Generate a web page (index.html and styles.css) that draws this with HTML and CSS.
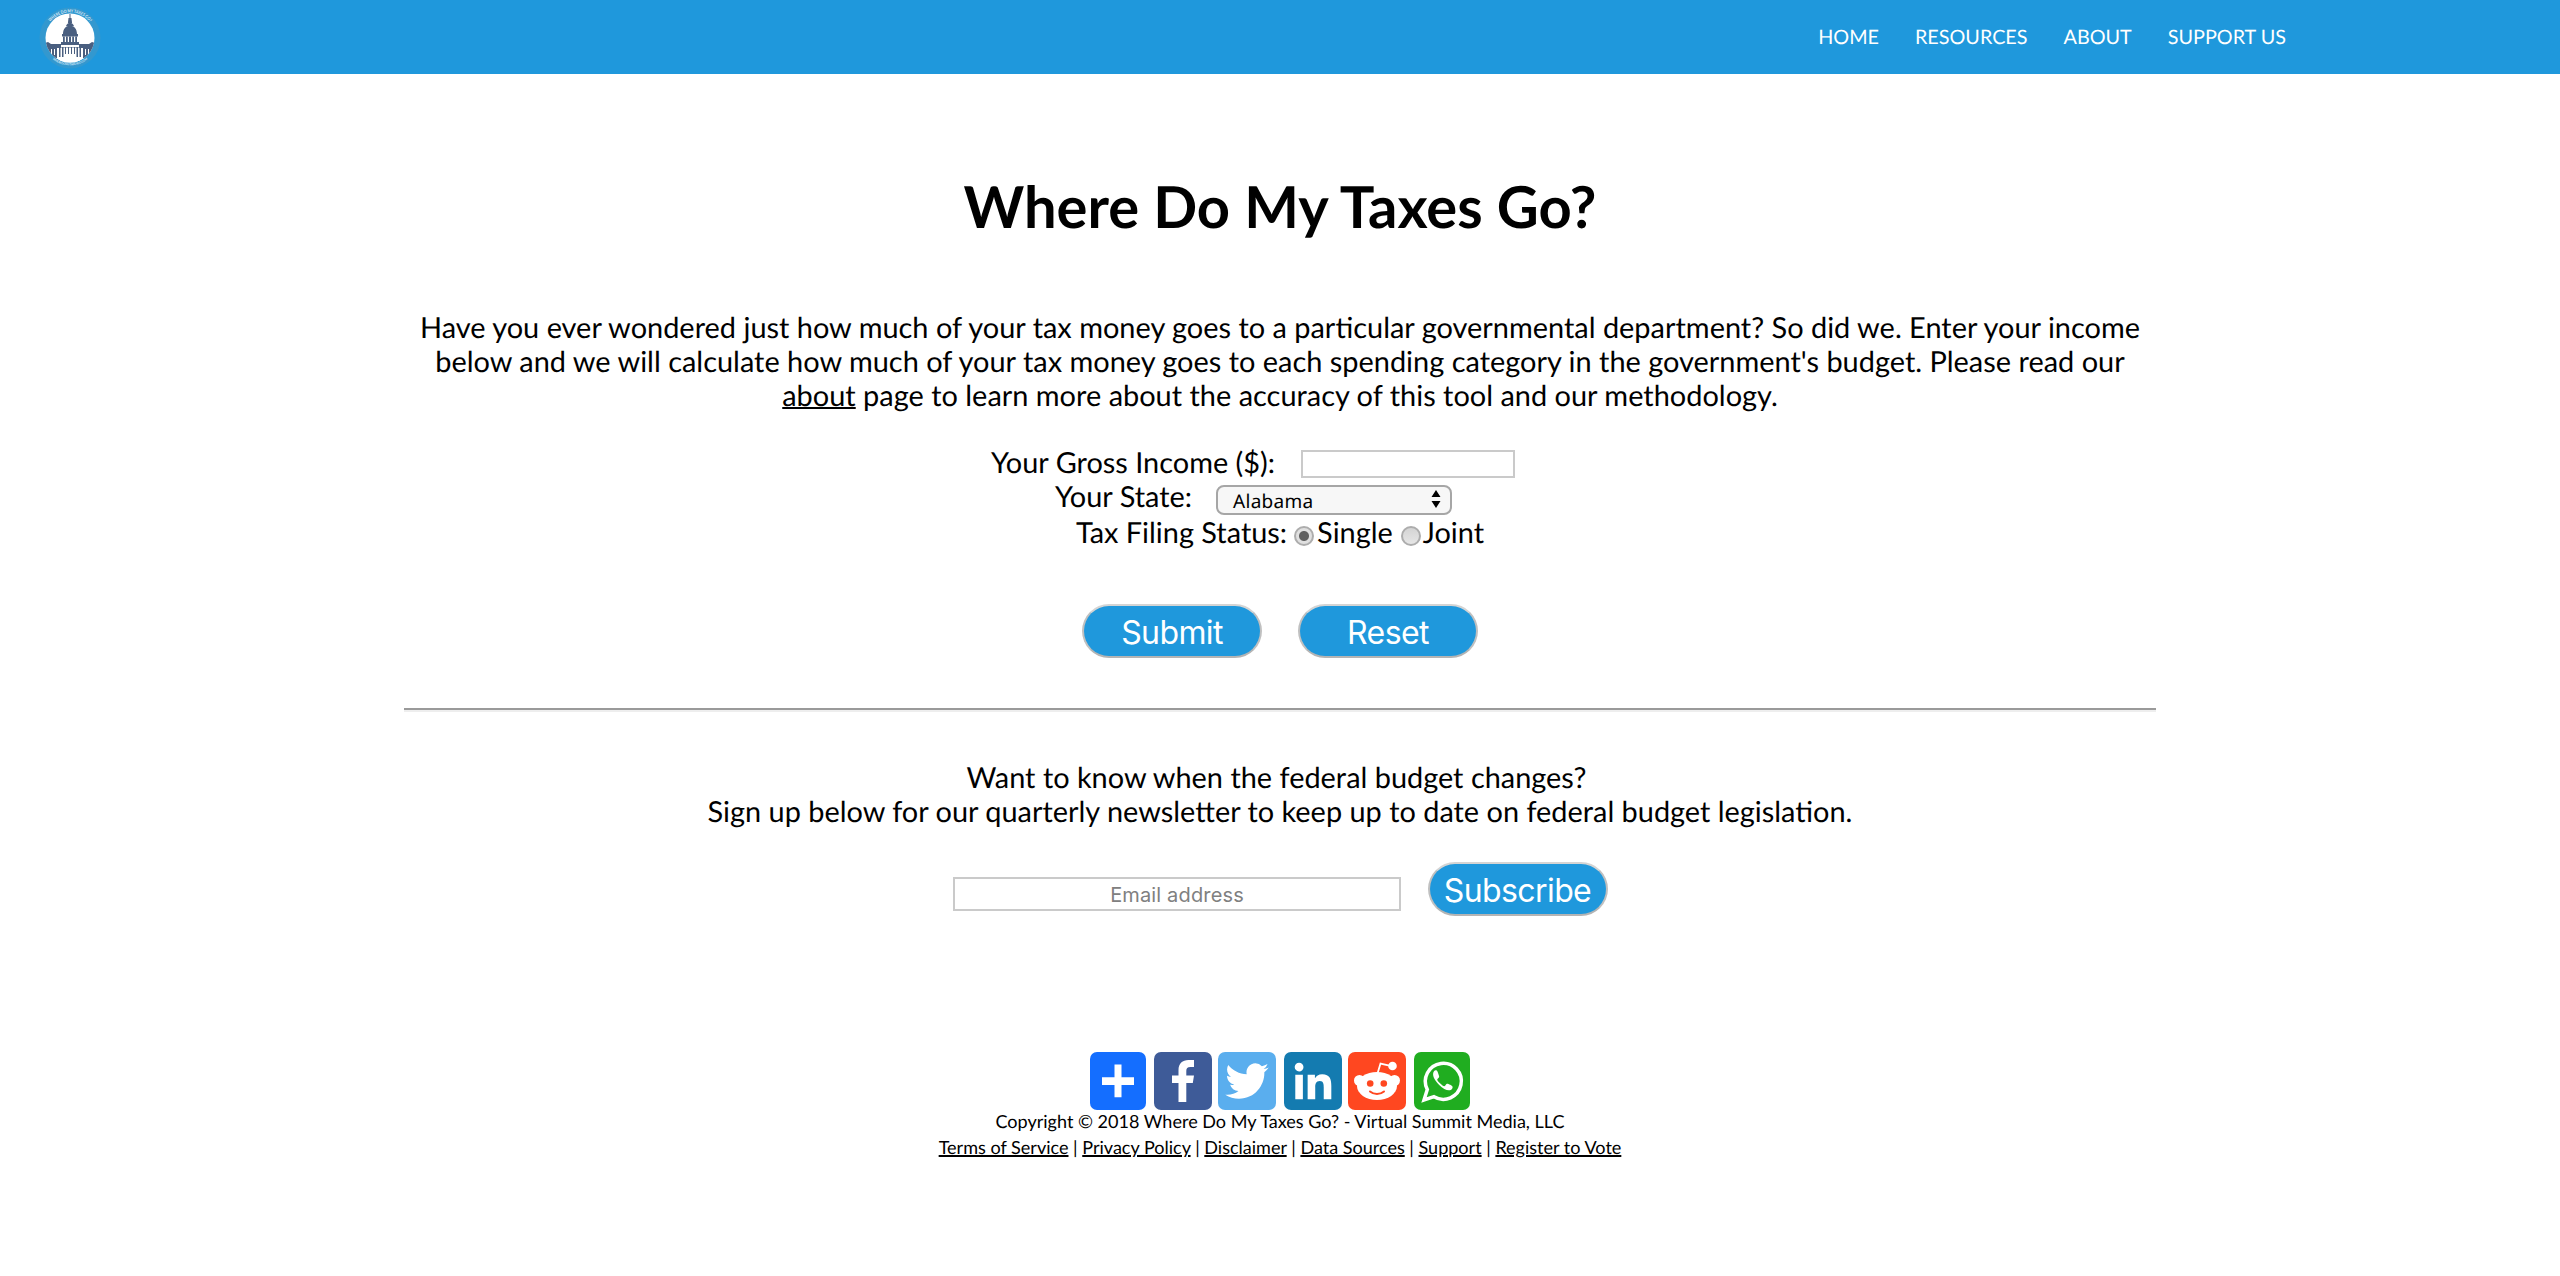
FILE: index.html
```html
<!DOCTYPE html>
<html lang="en">
<head>
<meta charset="utf-8">
<title>Where Do My Taxes Go?</title>
<link rel="stylesheet" href="styles.css">
</head>
<body>
<header class="topbar">
  <a class="logo" href="#">
    <svg width="62" height="62" viewBox="0 0 62 62">
      <defs>
        <path id="arcTop" d="M5.500 31a25.500 25.500 0 0 1 51 0"/>
        <path id="arcBottom" d="M3.500 31a27.500 27.500 0 0 0 55 0"/>
        <clipPath id="disc"><circle cx="31" cy="31" r="24.500"/></clipPath>
      </defs>
      <circle cx="31" cy="31" r="30.500" fill="#3398cf"/>
      <circle cx="31" cy="31" r="24.500" fill="#fff"/>
      <g clip-path="url(#disc)" fill="#4a5f80">
        <path d="M30.500 7h1v4h-1zM29.500 11h3l.6 5h-4.200zM27 19c1-2.500 2.500-3 4-3s3 .5 4 3zM24 27c0-5 3-8.500 7-8.500s7 3.500 7 8.500zM23 27h16v2.500H23zM22 35h18v3H22z"/>
        <path d="M24 29.500h1.800V35H24zM27 29.500h1.800V35H27zM30 29.500h2V35h-2zM33.200 29.500H35V35h-1.800zM36.200 29.500H38V35h-1.800z"/>
        <path d="M6 36l3-1 3 2h10v3.500h18V37h10l3-2 3 1v5H6zM6 40h12v11H6zM44 40h12v11H44zM20 40h1.500v10H20zM23 40h1.500v10H23zM26 40h1v7h-1zM29 40h1v7h-1zM32 40h1v7h-1zM35 40h1v7h-1zM37.500 40H39v10h-1.500zM40.500 40H42v10h-1.500z"/>
        <path d="M12 42h1v6h-1zM15 42h1v6h-1zM46 42h1v6h-1zM49 42h1v6h-1z" fill="#fff"/>
        <path d="M13 51h36L31 58z" fill="#fff"/>
      </g>
      <text class="ring ring-top"><textPath href="#arcTop" startOffset="50%" text-anchor="middle" textLength="45" lengthAdjust="spacingAndGlyphs">WHERE DO MY TAXES GO?</textPath></text>
      <text class="ring ring-bottom"><textPath href="#arcBottom" startOffset="50%" text-anchor="middle" textLength="38" lengthAdjust="spacingAndGlyphs">WHEREDOMYTAXESGO.COM</textPath></text>
    </svg>
  </a>
  <nav class="menu">
    <a href="#">HOME</a><a href="#">RESOURCES</a><a href="#">ABOUT</a><a href="#">SUPPORT US</a>
  </nav>
</header>
<main class="content">
  <h1>Where Do My Taxes Go?</h1>
  <p class="intro">Have you ever wondered just how much of your tax money goes to a particular governmental department? So did we. Enter your income<br>below and we will calculate how much of your tax money goes to each spending category in the government's budget. Please read our<br><a href="#">about</a> page to learn more about the accuracy of this tool and our methodology.</p>
  <form class="tax-form">
    <div class="row row-income"><label for="income">Your Gross Income ($):</label><input id="income" class="field income" type="text"></div>
    <div class="row row-state"><span>Your State:</span>
      <div class="select"><span>Alabama</span>
        <svg width="10" height="18" viewBox="0 0 10 18"><path d="M5 0l4.500 7h-9zM5 18l4.500-7h-9z"/></svg>
      </div>
    </div>
    <div class="row row-status"><span>Tax Filing Status:</span><i class="radio checked"></i><span>Single</span><i class="radio second"></i><span>Joint</span></div>
    <div class="actions"><button class="pill" type="button">Submit</button><button class="pill" type="button">Reset</button></div>
  </form>
  <hr>
  <p class="newsletter"><span class="question">Want to know when the federal budget changes?</span><br>Sign up below for our quarterly newsletter to keep up to date on federal budget legislation.</p>
  <form class="signup"><input class="field email" type="text" placeholder="Email address"><button class="pill" type="button">Subscribe</button></form>
</main>
<footer class="footer">
  <div class="share">
    <svg class="plus" width="56" height="58" viewBox="0 0 56 58"><rect width="56" height="58" rx="7" fill="#146eff"/><path d="M24.500 12.500h7v12.700H44V33H31.500v12.300h-7V33H12v-7.800h12.500z" fill="#fff"/></svg>
    <svg class="facebook" width="58" height="58" viewBox="0 0 58 58"><rect width="58" height="58" rx="7" fill="#3e5b98"/><path d="M24.500 50V31H18v-7.500h6.500V18c0-6.500 4-10 10-10H40v7h-3.600c-3 0-4.100 1.300-4.100 4v4.500H40L38.800 31h-6.500v19z" fill="#fff"/></svg>
    <svg class="twitter" width="58" height="58" viewBox="0 0 32 32"><rect width="32" height="32" rx="3.900" fill="#5aaeee"/><path fill="#fff" d="M28 8.557a9.913 9.913 0 0 1-2.828.775 4.930 4.930 0 0 0 2.166-2.725 9.738 9.738 0 0 1-3.130 1.194 4.920 4.920 0 0 0-3.593-1.550 4.924 4.924 0 0 0-4.794 6.049c-4.090-.21-7.720-2.170-10.150-5.150a4.942 4.942 0 0 0-.665 2.477c0 1.710.870 3.214 2.190 4.100a4.968 4.968 0 0 1-2.230-.616v.060c0 2.390 1.700 4.380 3.952 4.830-.414.115-.850.174-1.297.174-.318 0-.626-.030-.928-.086a4.935 4.935 0 0 0 4.600 3.420 9.893 9.893 0 0 1-6.114 2.107c-.398 0-.790-.023-1.175-.068a13.953 13.953 0 0 0 7.550 2.213c9.056 0 14.010-7.507 14.010-14.013 0-.213-.005-.426-.015-.637.960-.695 1.795-1.560 2.455-2.550z"/></svg>
    <svg class="linkedin" width="58" height="58" viewBox="0 0 32 32"><rect width="32" height="32" rx="3.900" fill="#147bb0"/><path fill="#fff" d="M6.227 12.610h4.190v13.480h-4.190V12.610zm2.095-6.700a2.430 2.430 0 0 1 0 4.860c-1.344 0-2.428-1.090-2.428-2.430s1.084-2.430 2.428-2.430m4.720 6.700h4.020v1.840h.058c.560-1.058 1.927-2.176 3.965-2.176 4.238 0 5.020 2.792 5.020 6.420v7.395h-4.183v-6.560c0-1.564-.030-3.574-2.178-3.574-2.180 0-2.514 1.700-2.514 3.460v6.668h-4.187V12.610z"/></svg>
    <svg class="reddit" width="58" height="58" viewBox="0 0 58 58"><rect width="58" height="58" rx="7" fill="#ff4720"/><g fill="#fff"><circle cx="11.500" cy="28.500" r="5.500"/><circle cx="46.500" cy="28.500" r="5.500"/><ellipse cx="29" cy="34" rx="20" ry="14"/><circle cx="44.500" cy="14" r="4.300"/></g><path d="M29.500 21.500l3-10 10 2.300" fill="none" stroke="#fff" stroke-width="1.800"/><circle cx="22.200" cy="31.500" r="3.300" fill="#ff4720"/><circle cx="35.800" cy="31.500" r="3.300" fill="#ff4720"/><path d="M22 39.500c4 3.300 10 3.300 14 0" fill="none" stroke="#ff4720" stroke-width="2" stroke-linecap="round"/></svg>
    <svg class="whatsapp" width="56" height="58" viewBox="0 0 56 58"><rect width="56" height="58" rx="7" fill="#20ad20"/><path d="M10 48l3.300-10.500a18 18 0 1 1 6.700 7.200z" fill="none" stroke="#fff" stroke-width="3.500"/><path fill="#fff" d="M21.500 18.300c-.8 0-2 1.200-2.300 2.700-.7 3.700 2.300 8.300 6 12 3.900 3.800 8.200 6 10.800 5.200 1.900-.6 3-2 2.500-3.800-.2-.8-4.600-3-5.600-2.700-1 .3-1.800 2.700-2.800 2.600-1.200-.1-6.600-4.800-6.900-6.500-.1-1 2-2 2-3 0-.9-1.500-5.400-2.200-6.100-.3-.4-.9-.4-1.500-.4z"/></svg>
  </div>
  <p class="copyright">Copyright © 2018 Where Do My Taxes Go? - Virtual Summit Media, LLC</p>
  <p class="links"><a href="#">Terms of Service</a> | <a href="#">Privacy Policy</a> | <a href="#">Disclaimer</a> | <a href="#">Data Sources</a> | <a href="#">Support</a> | <a href="#">Register to Vote</a></p>
</footer>
</body>
</html>
```
FILE: styles.css
```css
* { box-sizing: border-box; }
body { margin: 0; background: #fff; color: #000; font-family: Lato, sans-serif; text-rendering: geometricPrecision; }
a { color: inherit; }
p { margin: 0; }

.topbar { display: flex; justify-content: space-between; height: 74px; padding: 7px 274px 0 39px; background: #1f98dc; color: #fff; }
.logo { display: block; height: 62px; }
.logo svg { display: block; }
.ring { fill: #fff; fill-opacity: .8; font-family: Lato, sans-serif; font-weight: 700; }
.ring-top { font-size: 4.500px; }
.ring-bottom { font-size: 3px; }
.menu { display: flex; gap: 36px; padding-top: 18px; font-size: 19.800px; line-height: 24px; }
.menu a { text-decoration: none; }

.content { width: 1752px; margin: 0 auto; text-align: center; }
h1 { margin: 0; padding-top: 97px; font-size: 57.900px; line-height: 72px; font-weight: 700; }
.intro { padding-top: 68px; font-size: 28.930px; line-height: 34px; white-space: nowrap; }
.intro a, .links a { text-decoration-thickness: 2px; }

.tax-form { padding-top: 33px; font-size: 28.900px; line-height: 34px; }
.row { display: flex; justify-content: center; align-items: flex-start; height: 35px; }
.row-income { height: 34px; padding-right: 54px; }
.row-state { height: 36px; padding-right: 53px; }
.field { display: block; padding: 0; border: 2px solid #cacaca; background: #fff; font-family: Inter, sans-serif; }
.income { width: 214px; height: 28px; margin: 4px 0 0 26px; }
.select { display: flex; justify-content: space-between; align-items: center; width: 236px; height: 30px; margin: 5px 0 0 24px; padding: 0 9px 0 15px; border: 2px solid #a6a6a6; border-radius: 8px; background: #f7f7f7; font: 19px/24px "Noto Sans", sans-serif; letter-spacing: .3px; }
.select span { padding-top: 1px; }
.select svg { margin-top: -2px; }
.radio { width: 20px; height: 20px; margin: 10px 3px 0 7px; border: 2px solid #adadad; border-radius: 50%; background: linear-gradient(#d4d4d4, #e6e6e6); }
.radio.checked { background: radial-gradient(circle, #606060 4.500px, #e0e0e0 5.500px); }
.radio.second { margin: 10px 2px 0 8px; }
.actions { display: flex; justify-content: center; gap: 36px; padding-top: 53px; }
.pill { width: 180px; height: 54px; padding: 3px 0 0; border: 2px solid; border-color: #d4d4d4 #c0c0c0 #b4b4b4; border-radius: 27px; background: #1f98dc; color: #fff; font: 32px/46px Inter, sans-serif; letter-spacing: -.6px; }
hr { height: 4px; margin: 50px 0 0; border: 0; border-top: 2px solid #9a9a9a; background: #eee; }
.newsletter { padding-top: 49px; font-size: 28.900px; line-height: 34px; }
.question { padding-right: 7px; }
.signup { display: flex; justify-content: center; gap: 27px; padding-top: 33px; }
.email { width: 448px; height: 34px; margin-top: 15px; padding: 2px 0 0 1px; text-align: center; font-size: 20px; letter-spacing: .15px; }
.email::placeholder { color: #808080; opacity: 1; }

.footer { padding-top: 136px; text-align: center; font-size: 18.050px; line-height: 26px; }
.share { display: flex; justify-content: center; gap: 8px; height: 58px; margin-bottom: -2px; }
.share .twitter { margin-left: -2px; }
.share .reddit { margin-left: -2px; }
```
